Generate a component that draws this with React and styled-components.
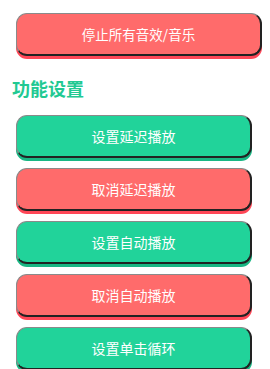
import React from "react";
import styled, { createGlobalStyle } from "styled-components";

const GlobalStyle = createGlobalStyle`
  body {
    margin: 0;
    background: #fff;
    font-family: "Noto Sans CJK SC", "Noto Sans", sans-serif;
  }
`;

const colors = {
  red: { fill: "#ff6b6b", shadow: "#ff4757" },
  green: { fill: "#21d39a", shadow: "#19b683" },
};

const Page = styled.div`
  display: flex;
  flex-direction: column;
  padding: 13px 8px 0 16px;
`;

const ActionButton = styled.button`
  box-sizing: border-box;
  display: flex;
  align-items: center;
  justify-content: center;
  width: ${(p) => (p.$wide ? "246px" : "236px")};
  height: 43px;
  margin-bottom: 10px;
  border-radius: 11px;
  border-style: solid;
  border-width: 1px 2px 2px 1px;
  border-color: #8a8a8a #222 #222 #8a8a8a;
  background: ${(p) => colors[p.$tone].fill};
  box-shadow: 0 3px 0 ${(p) => colors[p.$tone].shadow};
  color: #fff;
  font-family: "Noto Sans CJK SC", "Noto Sans", sans-serif;
  font-size: ${(p) => (p.$wide ? "13.5px" : "14px")};
  padding: 0;
  cursor: pointer;
`;

const SectionTitle = styled.h2`
  margin: 10px 0 14px -4px;
  font-size: 18px;
  line-height: 25px;
  font-weight: 700;
  color: #21c992;
`;

const buttons = [
  { label: "设置延迟播放", tone: "green" },
  { label: "取消延迟播放", tone: "red" },
  { label: "设置自动播放", tone: "green" },
  { label: "取消自动播放", tone: "red" },
  { label: "设置单击循环", tone: "green" },
];

export default function App() {
  return (
    <>
      <GlobalStyle />
      <Page>
        <ActionButton $tone="red" $wide>
          停止所有音效/音乐
        </ActionButton>
        <SectionTitle>功能设置</SectionTitle>
        {buttons.map((b) => (
          <ActionButton key={b.label} $tone={b.tone}>
            {b.label}
          </ActionButton>
        ))}
      </Page>
    </>
  );
}
